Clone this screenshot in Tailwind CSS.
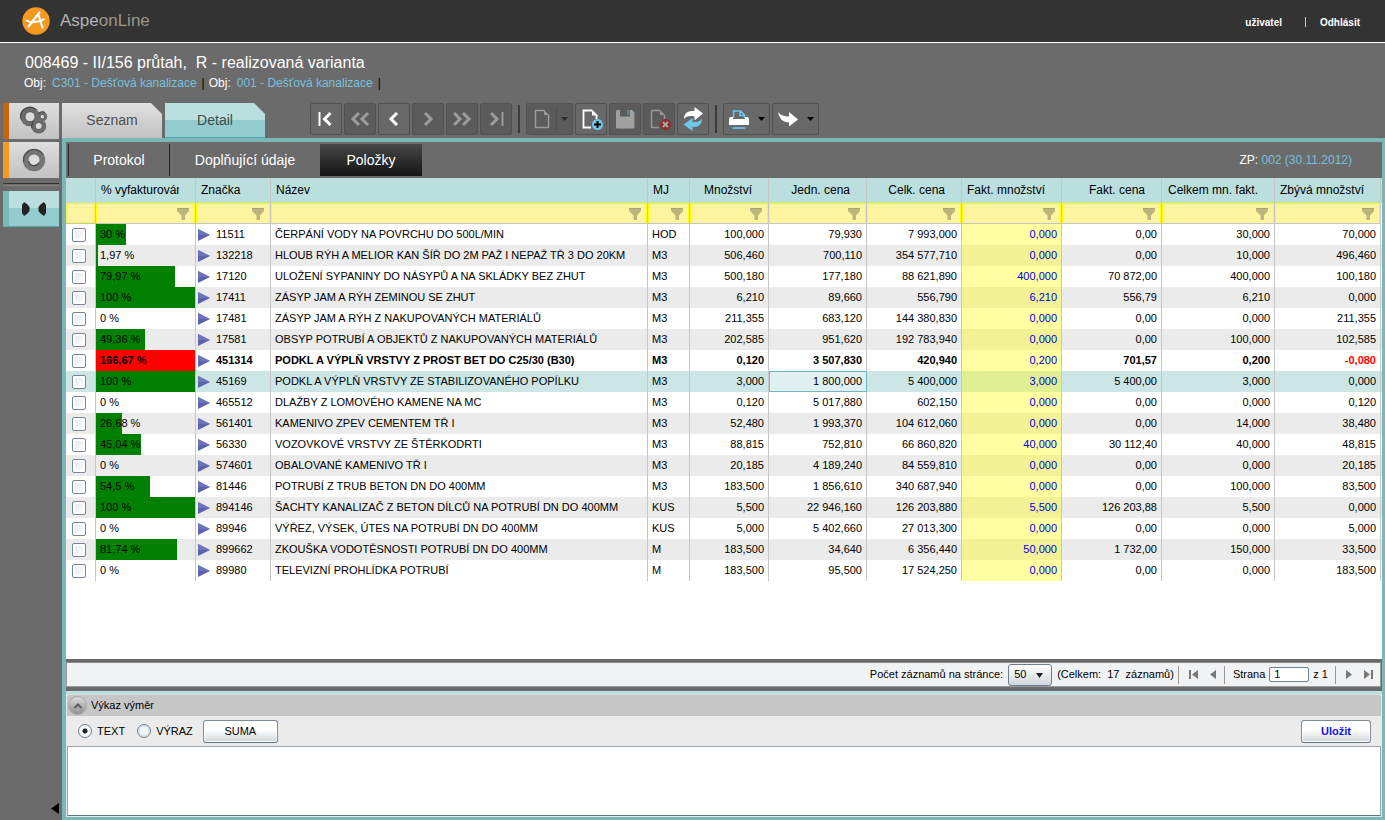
<!DOCTYPE html>
<html lang="cs">
<head>
<meta charset="utf-8">
<title>AspeonLine</title>
<script src="https://cdn.jsdelivr.net/npm/@tailwindcss/browser@4"></script>
</head>
<body class="flex h-screen flex-col overflow-hidden bg-[#6b6b6b] font-['Liberation_Sans',Arial,sans-serif] text-[11px] text-black">

<header class="flex h-[43px] shrink-0 items-center border-b border-white bg-[#333] pr-[25px] pl-[22px]">
  <svg class="h-7 w-7" viewBox="0 0 28 28" aria-hidden="true">
    <circle cx="14" cy="14" r="13.7" fill="#f7991f"/>
    <g fill="none" stroke="#fff" stroke-width="2.2" stroke-linecap="round" stroke-linejoin="round">
      <path d="M6.5 19.500 17.500 5.500M16.500 8 20.500 20.500"/><path d="M4.500 13.500 9 15.500 19 14 22 12" stroke-width="1.900"/>
    </g>
  </svg>
  <span class="ml-2.5 text-[17px] text-[#b2b2b2]">Aspe<span class="text-[#9c968c]">onLine</span></span>
  <nav class="ml-auto flex items-center pt-0.5 text-[10px] font-bold text-white">
    <a href="#">uživatel</a>
    <span class="mr-3.5 ml-[23px] h-2.5 w-px bg-[#c9c4f2]"></span>
    <a href="#">Odhlásit</a>
  </nav>
</header>

<section class="h-[60px] shrink-0 pt-2 pl-6 text-white">
  <h1 class="pl-px text-[16px] leading-6 whitespace-pre">008469 - II/156 průtah,  R - realizovaná varianta</h1>
  <p class="flex text-[12px] leading-4">
    <span class="mr-1.5">Obj:</span><a href="#" class="text-[#77c0dc]">C301 - Dešťová kanalizace</a><span class="mr-1 ml-[5px] text-black">|</span>
    <span class="mr-1.5">Obj:</span><a href="#" class="text-[#77c0dc]">001 - Dešťová kanalizace</a><span class="mr-1 ml-[5px] text-black">|</span>
  </p>
</section>

<div class="flex min-h-0 flex-1">
  <aside class="flex w-[62px] shrink-0 flex-col pr-[3px] pl-[3px]">
    <button aria-label="Skupiny" class="flex h-9 w-full items-center justify-center border-l-6 border-[#c8640f] bg-linear-to-b from-[#dedede] to-[#c2c2c2]">
      <svg class="h-8 w-8" viewBox="0 0 32 32">
        <g fill="#6c6c6c"><circle cx="12" cy="11.500" r="9.800"/><circle cx="24.300" cy="11.500" r="4.900"/><circle cx="20.700" cy="21" r="7.600"/></g>
        <g fill="none" stroke="#484848" stroke-width="1.200"><path d="M3 14A9.300 9.300 0 0 1 18 4.500"/><path d="M14 23a7 7 0 0 1 2-7"/><path d="M20.500 9a4.500 4.500 0 0 1 6-1.500"/></g>
        <g fill="#dadada" stroke="#4c4c4c" stroke-width=".8"><circle cx="12" cy="11.700" r="5"/><circle cx="24.300" cy="11.700" r="2.300"/><circle cx="20.700" cy="21" r="3.600"/></g>
      </svg>
    </button>
    <button aria-label="Objekt" class="mt-[3px] flex h-9 w-full items-center justify-center border-l-6 border-[#f7991f] bg-linear-to-b from-[#dedede] to-[#c2c2c2]">
      <svg class="h-7 w-7" viewBox="0 0 28 28">
        <circle cx="14" cy="14" r="11.200" fill="#767676"/>
        <path d="M3.600 16A10.600 10.600 0 0 1 23 8.500" fill="none" stroke="#505050" stroke-width="1.300"/>
        <circle cx="14" cy="14" r="5.500" fill="#dcdcdc"/><path d="M8.600 15A5.500 5.500 0 0 0 19 16.500" fill="none" stroke="#484848" stroke-width="1.300"/>
      </svg>
    </button>
    <div class="mt-[5px] h-[3px] border-t border-b border-t-[#333] border-b-[#927f82]"></div>
    <button aria-label="Hledat" class="mt-[5px] flex h-9 w-full items-center justify-center border-b border-l-6 border-b-[#55aaae] border-l-[#7ab8b8] bg-linear-to-b from-[#bbdfdf] from-50% to-[#92cccf] to-50%">
      <svg class="h-4 w-7" viewBox="0 0 28 16" fill="#222"><path d="M4 1 7.500 3.500 9.500 6v4L7.500 12.500 4 15 2 12V4ZM24 1 20.500 3.500 18.500 6v4l2 2.500L24 15l2-3V4Z"/></svg>
    </button>
    <button aria-label="Skrýt panel" class="mt-auto mb-1.5 self-end"><svg class="h-[11px] w-2" viewBox="0 0 8 11"><path d="M8 0v11L0 5.500Z"/></svg></button>
  </aside>

  <main class="flex min-w-0 flex-1 flex-col">
    <div class="flex h-[35px] shrink-0 items-start">
      <button class="h-[35px] w-[100px] bg-linear-to-b from-[#e0e0e0] to-[#c2c2c2] text-[14px] text-[#505050] [clip-path:polygon(0_0,89px_0,100%_11px,100%_100%,0_100%)]">Seznam</button>
      <button class="ml-[3px] h-[35px] w-[100px] border-b border-[#55aaae] bg-linear-to-b from-[#bbdfdf] from-50% to-[#92cccf] to-50% text-[14px] text-[#3e4c4c] [clip-path:polygon(0_0,89px_0,100%_11px,100%_100%,0_100%)]">Detail</button>
      <div id="toolbar" class="ml-[45px] flex items-center gap-0.5"></div>
    </div>

    <div class="flex min-h-0 flex-1 flex-col border-t-4 border-r-3 border-b-3 border-l-4 border-[#7ab8b8]">
      <div class="flex h-9 shrink-0 items-center pl-0.5 text-[14px] text-white">
        <button class="h-8 w-[101px] border-l border-[#222]">Protokol</button>
        <button class="h-8 w-[151px] border-l border-[#222]">Doplňující údaje</button>
        <button class="h-8 w-[102px] bg-linear-to-b from-[#484848] to-[#151515]">Položky</button>
        <p class="mr-[30px] ml-auto text-[12px]">ZP: <a href="#" class="text-[#77c0dc]">002 (30.11.2012)</a></p>
      </div>

      <div class="min-h-0 flex-1 overflow-hidden bg-white">
        <table class="w-full table-fixed border-separate border-spacing-0 text-[11px]">
          <colgroup>
            <col class="w-[30px]"><col class="w-[100px]"><col class="w-[75px]"><col><col class="w-[42px]"><col class="w-[79px]"><col class="w-[98px]"><col class="w-[95px]"><col class="w-[100px]"><col class="w-[100px]"><col class="w-[113px]"><col class="w-[106px]"><col class="w-px">
          </colgroup>
          <thead id="head"></thead>
          <tbody id="rows"></tbody>
        </table>
      </div>

      <div class="mt-[3px] mr-px mb-1 flex h-[25px] shrink-0 items-center justify-end border border-[#999] border-t-[#888] bg-[#f1f2f4] pr-[7px]">
        <label for="size">Počet záznamů na stránce:</label>
        <div class="relative ml-[5px]">
          <select id="size" class="block h-[22px] w-11 appearance-none rounded-[3px] border border-[#6c7f92] bg-linear-to-b from-white to-[#d3d7db] pl-[5px]"><option>50</option></select>
          <svg class="pointer-events-none absolute top-[9px] right-[9px] h-[5px] w-[7px]" viewBox="0 0 7 5"><path d="M0 0h7L3.500 5Z" fill="#222"/></svg>
        </div>
        <span class="ml-[5px] whitespace-pre">(Celkem:  17  záznamů)</span>
        <span class="ml-1 h-[18px] w-px bg-[#999]"></span>
        <button aria-label="První strana" class="ml-2.5"><svg class="h-[9px] w-[9px]" viewBox="0 0 9 9" fill="#777"><path d="M0 0h2v9H0ZM9 0v9L3 4.500Z"/></svg></button>
        <button aria-label="Předchozí strana" class="ml-3"><svg class="h-[9px] w-1.5" viewBox="0 0 6 9" fill="#777"><path d="M6 0v9L0 4.500Z"/></svg></button>
        <span class="ml-2 h-[18px] w-px bg-[#999]"></span>
        <label for="page" class="ml-2">Strana</label>
        <input id="page" value="1" class="mr-1 ml-1 h-[15px] w-10 rounded-[2px] border border-[#6c8297] bg-white pl-1">
        <span>z 1</span>
        <span class="ml-[7px] h-[18px] w-px bg-[#999]"></span>
        <button aria-label="Další strana" class="ml-2.5"><svg class="h-[9px] w-1.5" viewBox="0 0 6 9" fill="#777"><path d="M0 0v9L6 4.500Z"/></svg></button>
        <button aria-label="Poslední strana" class="ml-3"><svg class="h-[9px] w-[9px]" viewBox="0 0 9 9" fill="#777"><path d="M7 0h2v9H7ZM0 0v9L6 4.500Z"/></svg></button>
      </div>

      <section class="shrink-0 border-t-3 border-[#bbdfdf] bg-[#e4e8e8] px-px pb-px">
        <div class="flex h-[22px] items-center rounded-t-[3px] border-t border-[#ddd] bg-[#c6c6c6] pl-px">
          <button aria-label="Sbalit" class="flex h-[19px] w-[19px] items-center justify-center rounded-full border border-[#a6a6a6] bg-linear-to-b from-[#ddd] to-[#909090]">
            <svg class="h-2.5 w-2.5" viewBox="0 0 10 10" fill="none" stroke="#5c5c5c" stroke-width="2"><path d="m1.500 7 3.500-3.500L8.500 7"/></svg>
          </button>
          <h2 class="ml-1">Výkaz výměr</h2>
        </div>
        <div class="flex h-[30px] items-center bg-[#ebebeb] pr-2.5 pl-[11px]">
          <label class="flex items-center gap-[5px]"><input type="radio" name="mode" checked class="h-3.5 w-3.5 appearance-none rounded-full border border-[#6c7f92] bg-[#eef2f6] bg-radial checked:from-[#222] checked:from-[2px] checked:to-[#f4f7fa] checked:to-[3px]">TEXT</label>
          <label class="ml-3 flex items-center gap-[5px]"><input type="radio" name="mode" class="h-3.5 w-3.5 appearance-none rounded-full border border-[#6c7f92] bg-[#f4f7fa] inset-ring-2 inset-ring-[#dde4ea]">VÝRAZ</label>
          <button class="ml-2.5 h-[23px] w-[75px] rounded-[3px] border border-[#7d8c9b] border-b-[#5c7083] bg-linear-to-b from-white from-40% to-[#d0d5da] inset-ring inset-ring-white">SUMA</button>
          <button class="ml-auto h-[23px] w-[70px] rounded-[3px] border border-[#7d8c9b] border-b-[#5c7083] bg-linear-to-b from-white from-40% to-[#d0d5da] font-bold text-[#0f0fff] inset-ring inset-ring-white">Uložit</button>
        </div>
        <textarea aria-label="Výkaz výměr" class="block h-[70px] w-full resize-none rounded-[1px] border border-[#98a3ae] border-b-[#5c7083] bg-white p-1"></textarea>
      </section>
    </div>
  </main>
</div>

<script>
const chev = 'fill="none" stroke-width="3"';
const page = 'M14.500 3.500H5.500v17h13V7.500';
// name, enabled, has a drop-down, drawing
const tools = [
  ['První', 1, 0, `<g stroke="#fff" ${chev}><path d="M5.500 5v14" stroke-width="2"/><path d="m16.500 6-6 6 6 6"/></g>`],
  ['O stránku zpět', 0, 0, `<g stroke="#9c9c9c" ${chev}><path d="m11 6-6 6 6 6M20 6l-6 6 6 6"/></g>`],
  ['Předchozí', 1, 0, `<g stroke="#fff" ${chev}><path d="m15 6-6 6 6 6"/></g>`],
  ['Další', 0, 0, `<g stroke="#9c9c9c" ${chev}><path d="m9 6 6 6-6 6"/></g>`],
  ['O stránku vpřed', 0, 0, `<g stroke="#9c9c9c" ${chev}><path d="m4 6 6 6-6 6M13 6l6 6-6 6"/></g>`],
  ['Poslední', 0, 0, `<g stroke="#9c9c9c" ${chev}><path d="M18.500 5v14" stroke-width="2"/><path d="m7 6 6 6-6 6"/></g>`],
  null,
  ['Nový', 0, 1, `<path d="${page}" fill="none" stroke="#9c9c9c" stroke-width="1.500"/><path d="M14 3v5h5Z" fill="#9c9c9c"/>`],
  ['Přidat', 1, 0, `<path d="M13 3.500H4.500v17H12M17.500 8v4" fill="none" stroke="#fff" stroke-width="1.800"/><path d="M13 2.500v6h6Z" fill="#fff"/><circle cx="18.500" cy="17.500" r="5.500" fill="#6ec6e8"/><path d="M18.500 14v7M15 17.500h7" stroke="#000" stroke-width="2"/>`],
  ['Uložit záznam', 0, 0, '<path d="M4.500 3H7v6.500h10V3h2l2.500 2.500V20q0 1.500-1.500 1.500H4.500Q3 21.500 3 20V4.500Q3 3 4.500 3Z" fill="#a0a0a0"/><path d="M14 3h2.500v5H14Z" fill="#5c8494"/>'],
  ['Smazat', 0, 0, `<path d="M13 3.500H4.500v17H12M17.500 8v4" fill="none" stroke="#989898" stroke-width="1.500"/><path d="M13 3v5h5Z" fill="#989898"/><circle cx="18.500" cy="17.500" r="5.500" fill="#8e2d2d"/><path d="m16 15 5 5m0-5-5 5" stroke="#aaa" stroke-width="2"/>`],
  ['Obnovit', 1, 0, '<path d="M3 12C3 6 7 3.500 13.500 4V0l8.500 6.500-8.500 7V9.500C8 8.500 5 9.500 3 12Z" fill="#fff"/><path d="M21 11.500c0 6-3.500 9-9.500 8.500v4L2.500 17.500l9-6.500v4c4.500.500 7.500-.500 9.500-3.500Z" fill="#6ec6e8"/>'],
  null,
  ['Tisk', 1, 1, '<path d="M6.500 11V4h7l4 4v3M13 4v4.500h4.500" fill="none" stroke="#6ec6e8" stroke-width="1.600"/><path d="M4 10h2v2h12v-2h2q2 0 2 2v6h-3v-2H5v2H2v-6q0-2 2-2Z" fill="#fff"/><path d="M5 16h14v2H5Z" fill="#fff"/><path d="M5.500 21h13" stroke="#6ec6e8" stroke-width="1.600"/>'],
  ['Přejít', 1, 1, '<path d="M2 5Q5.500 9.500 13 9.500V5l9 7.500-9 7V15.500Q3.500 15 2 5Z" fill="#fff"/>']
];
document.getElementById('toolbar').innerHTML = tools.map(t => {
  if (!t) return '<span class="mx-1 h-7 w-0.5 bg-[#3c3c3c]"></span>';
  const [name, on, menu, art] = t;
  const tone = on ? 'border-[#505050] bg-[#686868]' : 'border-[#525252] bg-[#5b5b5b]';
  const width = menu ? 'w-[47px] justify-between pr-1 pl-[3px]' : 'w-8 justify-center';
  const arrow = `${on ? '' : '<span class="ml-auto mr-1 h-6 w-px bg-[#505050]"></span>'}<svg class="h-1 w-[7px]" viewBox="0 0 7 4"><path d="M0 0h7L3.500 4Z" fill="${on ? '#000' : '#2c2c2c'}"/></svg>`;
  return `<button aria-label="${name}" class="flex h-8 items-center rounded-[2px] border ${tone} ${width}"><svg class="h-6 w-6 shrink-0" viewBox="0 0 24 24">${art}</svg>${menu ? arrow : ''}</button>`;
}).join('');

const heads = ['', '% vyfakturováno', 'Značka', 'Název', 'MJ', 'Množství', 'Jedn. cena', 'Celk. cena', 'Fakt. množství', 'Fakt. cena', 'Celkem mn. fakt.', 'Zbývá množství'];
const funnel = '<svg class="pointer-events-none absolute top-1 right-1.5 h-3.5 w-3" viewBox="0 0 12 14"><path d="M0 1h12v3L8 8.500V13H4.500V8.500L0 4Z" fill="#beb57c"/><path d="M0 1h12v1H0Z" fill="#aaa378"/></svg>';
document.getElementById('head').innerHTML =
  '<tr>' + heads.map((h, i) => `<th class="h-[25px] overflow-hidden border-r border-[#c6c6c6] bg-[#bbdfdf] p-0 pr-4 pb-0.5 pl-[5px] text-[12px] font-normal whitespace-nowrap ${i > 4 ? 'text-right' : 'text-left'}"><div class="overflow-hidden">${h}</div></th>`).join('') + '<td class="bg-[#bbdfdf] p-0"></td></tr><tr>' +
  heads.map((h, i) => `<td class="relative h-[21px] border-r border-b border-[#c6c6c6] p-0">${i ? `<input aria-label="Filtr ${h}" class="block h-5 w-full border border-b-0 border-[#ff0] bg-[#fff5a0] px-1">${funnel}` : '<div class="h-5 border border-[#fff04a] bg-[#fff5a0]"></div>'}</td>`).join('') + '<td class="p-0"></td></tr>';

const data = `30|11511|ČERPÁNÍ VODY NA POVRCHU DO 500L/MIN|HOD|100,000|79,930|7 993,000|0,000|0,00|30,000|70,000
1,97|132218|HLOUB RÝH A MELIOR KAN ŠÍŘ DO 2M PAŽ I NEPAŽ TŘ 3 DO 20KM|M3|506,460|700,110|354 577,710|0,000|0,00|10,000|496,460
79,97|17120|ULOŽENÍ SYPANINY DO NÁSYPŮ A NA SKLÁDKY BEZ ZHUT|M3|500,180|177,180|88 621,890|400,000|70 872,00|400,000|100,180
100|17411|ZÁSYP JAM A RÝH ZEMINOU SE ZHUT|M3|6,210|89,660|556,790|6,210|556,79|6,210|0,000
0|17481|ZÁSYP JAM A RÝH Z NAKUPOVANÝCH MATERIÁLŮ|M3|211,355|683,120|144 380,830|0,000|0,00|0,000|211,355
49,36|17581|OBSYP POTRUBÍ A OBJEKTŮ Z NAKUPOVANÝCH MATERIÁLŮ|M3|202,585|951,620|192 783,940|0,000|0,00|100,000|102,585
166,67|451314|PODKL A VÝPLŇ VRSTVY Z PROST BET DO C25/30 (B30)|M3|0,120|3 507,830|420,940|0,200|701,57|0,200|-0,080
100|45169|PODKL A VÝPLŇ VRSTVY ZE STABILIZOVANÉHO POPÍLKU|M3|3,000|1 800,000|5 400,000|3,000|5 400,00|3,000|0,000
0|465512|DLAŽBY Z LOMOVÉHO KAMENE NA MC|M3|0,120|5 017,880|602,150|0,000|0,00|0,000|0,120
26,68|561401|KAMENIVO ZPEV CEMENTEM TŘ I|M3|52,480|1 993,370|104 612,060|0,000|0,00|14,000|38,480
45,04|56330|VOZOVKOVÉ VRSTVY ZE ŠTĚRKODRTI|M3|88,815|752,810|66 860,820|40,000|30 112,40|40,000|48,815
0|574601|OBALOVANÉ KAMENIVO TŘ I|M3|20,185|4 189,240|84 559,810|0,000|0,00|0,000|20,185
54,5|81446|POTRUBÍ Z TRUB BETON DN DO 400MM|M3|183,500|1 856,610|340 687,940|0,000|0,00|100,000|83,500
100|894146|ŠACHTY KANALIZAČ Z BETON DÍLCŮ NA POTRUBÍ DN DO 400MM|KUS|5,500|22 946,160|126 203,880|5,500|126 203,88|5,500|0,000
0|89946|VÝŘEZ, VÝSEK, ÚTES NA POTRUBÍ DN DO 400MM|KUS|5,000|5 402,660|27 013,300|0,000|0,00|0,000|5,000
81,74|899662|ZKOUŠKA VODOTĚSNOSTI POTRUBÍ DN DO 400MM|M|183,500|34,640|6 356,440|50,000|1 732,00|150,000|33,500
0|89980|TELEVIZNÍ PROHLÍDKA POTRUBÍ|M|183,500|95,500|17 524,250|0,000|0,00|0,000|183,500`.split('\n').map(r => r.split('|'));

document.getElementById('rows').innerHTML = data.map((r, n) => {
  const pct = parseFloat(r[0].replace(',', '.'));
  const selected = n === 7;
  const over = pct > 100;
  const cell = (inner, cls) => `<td class="border-r border-[#c6c6c6] py-0 whitespace-nowrap ${cls}">${inner}</td>`;
  const nums = r.slice(4).map((v, i) => {
    if (i === 3) return cell(v, 'bg-[#ffff00]/37 pr-1 pl-0 text-right font-normal text-[#0000e6]');
    if (i === 1 && selected) return cell(v, 'bg-[#e0f0f0] pr-1 pl-0 text-right outline outline-offset-[-1px] outline-[#6fb7c8]');
    return cell(v, v[0] === '-' ? 'pr-1 pl-0 text-right text-[#f00]' : 'pr-1 pl-0 text-right');
  }).join('');
  const tone = selected ? 'bg-[#cce6e6]' : n % 2 ? 'bg-[#ebebeb]' : 'bg-white';
  return `<tr class="h-[21px] ${tone} ${over ? 'font-bold' : ''}">` +
    cell(`<input type="checkbox" aria-label="Vybrat ${r[1]}" class="block h-3.5 w-3.5 appearance-none rounded-[2px] border border-[#74879a] bg-linear-to-br from-[#e2e8ee] to-white inset-ring-2 inset-ring-white">`, 'pr-0 pl-1.5') +
    cell(`<div class="relative flex h-[21px] items-center pl-1"><div class="absolute inset-y-0 left-0 ${over ? 'bg-[#f00]' : 'bg-[#008000]'}" style="width:${Math.min(pct, 100)}%"></div><span class="relative">${r[0]} %</span></div>`, 'px-0') +
    cell(`<span class="flex items-center"><svg class="mr-1.5 h-3 w-3" viewBox="0 0 12 12"><path d="M0 0v12L12 6Z" fill="#5b62ae"/><path d="M0 0v6h12Z" fill="#6d74bb"/></svg>${r[1]}</span>`, 'pr-0 pl-0.5') +
    cell(r[2], 'overflow-hidden pr-0 pl-1') + cell(r[3], 'pr-0 pl-1') + nums + '<td class="p-0"></td></tr>';
}).join('');
</script>
</body>
</html>
